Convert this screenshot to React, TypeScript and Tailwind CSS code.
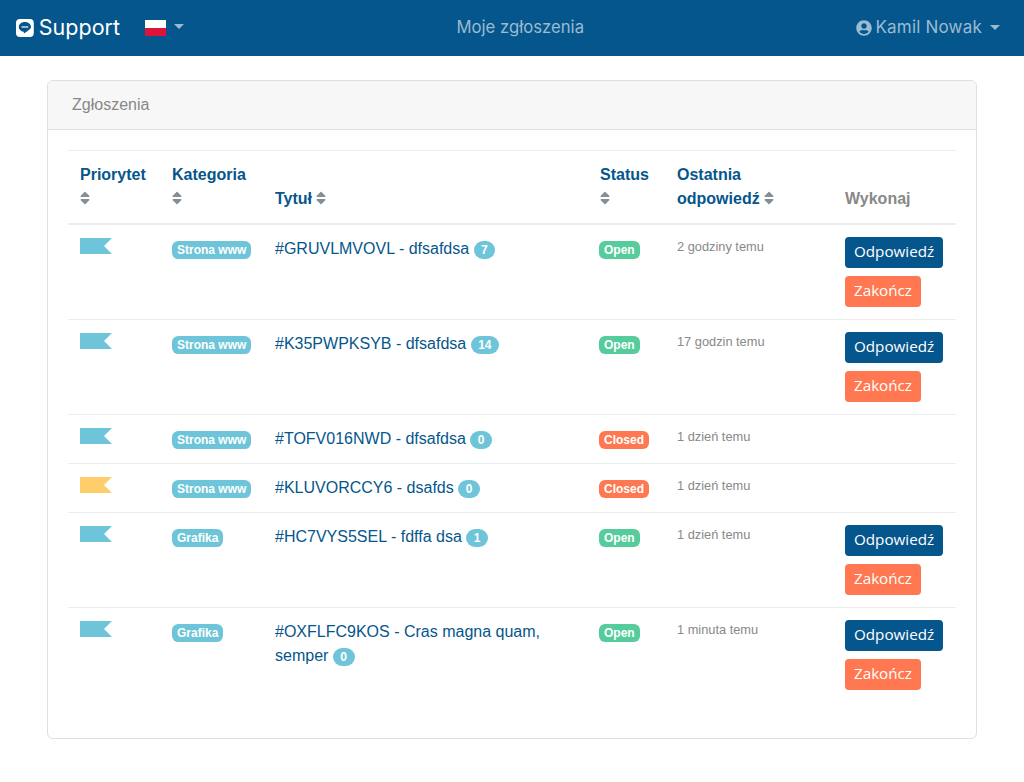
import { FaSort, FaUserCircle } from "react-icons/fa";

const sans = "font-['Liberation_Sans',Arial,sans-serif]";

type Ticket = {
  flag: string;
  category: string;
  id: string;
  title: string;
  count: number;
  status: "Open" | "Closed";
  time: string;
};

const tickets: Ticket[] = [
  { flag: "#6ec4d8", category: "Strona www", id: "#GRUVLMVOVL", title: "dfsafdsa", count: 7, status: "Open", time: "2 godziny temu" },
  { flag: "#6ec4d8", category: "Strona www", id: "#K35PWPKSYB", title: "dfsafdsa", count: 14, status: "Open", time: "17 godzin temu" },
  { flag: "#6ec4d8", category: "Strona www", id: "#TOFV016NWD", title: "dfsafdsa", count: 0, status: "Closed", time: "1 dzień temu" },
  { flag: "#ffcd69", category: "Strona www", id: "#KLUVORCCY6", title: "dsafds", count: 0, status: "Closed", time: "1 dzień temu" },
  { flag: "#6ec4d8", category: "Grafika", id: "#HC7VYS5SEL", title: "fdffa dsa", count: 1, status: "Open", time: "1 dzień temu" },
  { flag: "#6ec4d8", category: "Grafika", id: "#OXFLFC9KOS", title: "Cras magna quam, semper", count: 0, status: "Open", time: "1 minuta temu" },
];

function Caret({ className }: { className: string }) {
  return <span className={`inline-block border-x-[5px] border-t-[5px] border-x-transparent ${className}`} />;
}

function Sort() {
  return <FaSort className="inline-block w-[10px] h-[16px] text-[#868e96] align-[-2px]" />;
}

function Logo() {
  return (
    <svg width="18" height="18" viewBox="0 0 18 18">
      <rect width="18" height="18" rx="4" fill="#fff" />
      <path d="M9 3c-3.500 0-6.200 2.200-6.200 5 0 2.400 2 4.400 4.900 4.800.4.100.3.600.2 1.300 0 .3.200.4.500.2 1.800-1 3.500-2.200 4.900-3.500C14.500 9.800 15.200 8.900 15.200 8c0-2.800-2.700-5-6.200-5z" fill="#05568c" />
      <rect x="5.500" y="7" width="7" height="2" rx=".4" fill="#fff" opacity=".6" />
    </svg>
  );
}

function Navbar() {
  return (
    <nav className="h-14 bg-[#05568c] flex items-center pl-4 pr-6 font-['Inter',sans-serif]">
      <div className="flex items-center w-[168px]">
        <Logo />
        <span className="ml-[5px] text-[21.500px] leading-none text-white">Support</span>
        <div className="ml-[25px] w-[21px] h-[16px] flex flex-col shrink-0">
          <div className="h-[8px] bg-white" />
          <div className="h-[8px] bg-[#dc143c]" />
        </div>
        <Caret className="ml-2 mb-1 border-t-[#9bbbd1]" />
      </div>
      <div className="flex-1 text-center text-[16.700px] text-[#9bbbd1]">Moje zgłoszenia</div>
      <div className="flex items-center text-[#9bbbd1] text-[17px] tracking-[0.2px]">
        <FaUserCircle className="text-[16px] mr-[3px]" />
        <span>Kamil Nowak</span>
        <Caret className="ml-[8px] mb-[2px] border-t-[#9bbbd1]" />
      </div>
    </nav>
  );
}

function HeadCell({ children, className }: { children: React.ReactNode; className?: string }) {
  return (
    <th className={`px-3 pt-3 pb-[12px] align-bottom text-left font-bold text-[16px] leading-[24px] text-[#05568c] ${className ?? ""}`}>
      {children}
    </th>
  );
}

function Row({ t }: { t: Ticket }) {
  return (
    <tr className="border-t border-[#dee2e6]/60">
      <td className="px-3 py-3 align-top">
        <svg width="32" height="16" viewBox="0 0 32 16" className="mt-[1px] block">
          <polygon points="0,0 32,0 24,8 32,16 0,16" fill={t.flag} />
        </svg>
      </td>
      <td className="px-3 py-3 align-top">
        <span className="inline-block mt-[4px] rounded-[6.400px] bg-[#6ec4d8] px-[5px] text-[12px] leading-[18px] font-bold text-white whitespace-nowrap align-top">{t.category}</span>
      </td>
      <td className="px-3 py-3 align-top text-[16px] leading-[24px] text-[#05568c]">
        {t.id} - {t.title}{" "}
        <span className="inline-block rounded-[10px] bg-[#6ec4d8] px-[7.500px] text-[12px] leading-[18px] font-bold text-white">{t.count}</span>
      </td>
      <td className="px-3 py-3 align-top">
        <span className={`inline-block -ml-px mt-[4px] rounded-[6px] px-[5px] text-[12px] leading-[18px] font-bold text-white align-top ${t.status === "Open" ? "bg-[#56cc9d]" : "bg-[#ff7851]"}`}>{t.status}</span>
      </td>
      <td className="px-3 py-3 align-top text-[12.800px] leading-[20px] font-normal text-[#888888]">{t.time}</td>
      <td className="px-3 py-3 align-top">
        {t.status === "Open" && (
          <div className="flex flex-col items-start gap-2 font-['Open_Sans',sans-serif]">
            <button className="h-[31px] rounded-[4px] bg-[#05568c] px-[9px] pb-[2px] text-[15.200px] text-white">Odpowiedź</button>
            <button className="h-[31px] rounded-[4px] bg-[#ff7851] px-[9px] pb-[2px] text-[15.200px] text-white">Zakończ</button>
          </div>
        )}
      </td>
    </tr>
  );
}

export default function App() {
  return (
    <div className={`min-h-[782px] bg-white ${sans}`}>
      <Navbar />
      <main className="px-[47px] pt-6">
        <div className="rounded-[6px] border border-[#dfdfdf] h-[659px]">
          <div className="h-[49px] rounded-t-[6px] border-b border-[#dfdfdf] bg-[#f7f7f7] px-6 flex items-center text-[16px] text-[#888888]">Zgłoszenia</div>
          <div className="px-5 pt-5">
            <table className="w-full table-fixed border-t border-[#dee2e6]/60">
              <colgroup>
                <col className="w-[92px]" />
                <col className="w-[103px]" />
                <col className="w-[325px]" />
                <col className="w-[77px]" />
                <col className="w-[168px]" />
                <col className="w-[123px]" />
              </colgroup>
              <thead>
                <tr className="border-b-2 border-[#dee2e6]/60">
                  <HeadCell>Priorytet<br /><Sort /></HeadCell>
                  <HeadCell>Kategoria<br /><Sort /></HeadCell>
                  <HeadCell>Tytuł <Sort /></HeadCell>
                  <HeadCell>Status<br /><Sort /></HeadCell>
                  <HeadCell>Ostatnia<br />odpowiedź <Sort /></HeadCell>
                  <HeadCell className="!text-[#888888]">Wykonaj</HeadCell>
                </tr>
              </thead>
              <tbody>
                {tickets.map((t) => <Row key={t.id} t={t} />)}
              </tbody>
            </table>
          </div>
        </div>
      </main>
    </div>
  );
}
